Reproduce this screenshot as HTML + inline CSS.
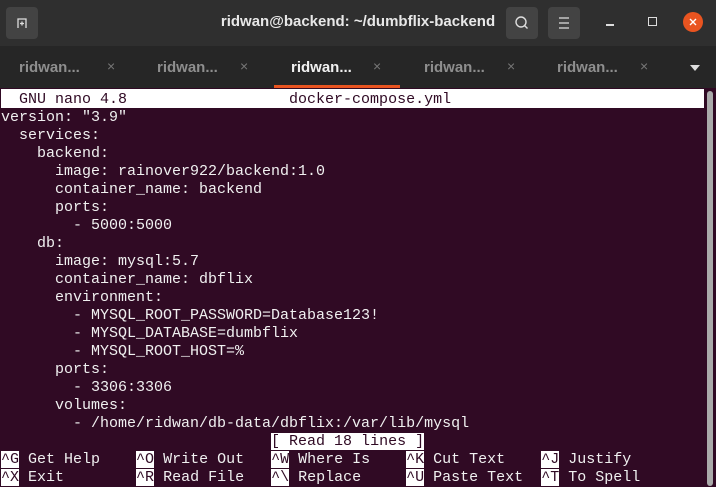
<!DOCTYPE html>
<html><head><style>
*{margin:0;padding:0;box-sizing:border-box}
body{width:716px;height:486px;overflow:hidden;background:#300a24;font-family:"Liberation Sans",sans-serif;position:relative}
.hdr{position:absolute;left:0;top:0;width:716px;height:46px;background:#2f2f2f}
.tabs{position:absolute;left:0;top:46px;width:716px;height:42px;background:#262626}
.btn{position:absolute;top:7px;width:32px;height:32px;background:#434343;border-radius:4px}
.title{position:absolute;top:13px;left:0;width:716px;text-align:center;color:#e8e8e8;font-weight:bold;font-size:15px}
.tab{position:absolute;top:13px;font-size:15px;font-weight:bold;color:#8e8e8e}
.x{position:absolute;top:12px;color:#777;font-size:14px}
.term{position:absolute;left:1px;top:91px;font-family:"Liberation Mono",monospace;font-size:15px;line-height:18px;color:#f0f0f0;white-space:pre}
.inv{background:#fff;color:#300a24}
.sb{position:absolute;left:707px;top:91px;width:6px;height:395px;background:#aaa;border-radius:3px}
</style></head><body>
<div class="hdr">
<div class="btn" style="left:6px"><svg width="32" height="32"><path d="M12 21V12h8v9M14 16.5h4M16 14.5v4" stroke="#ddd" stroke-width="1.3" fill="none"/></svg></div>
<div class="title">ridwan@backend: ~/dumbflix-backend</div>
<div class="btn" style="left:506px"><svg width="32" height="32"><circle cx="15" cy="15" r="5" stroke="#ddd" stroke-width="1.4" fill="none"/><path d="M18.5 18.5l3 3" stroke="#ddd" stroke-width="1.4"/></svg></div>
<div class="btn" style="left:548px"><svg width="32" height="32"><path d="M11 11h10M11 16h10M11 21h10" stroke="#ddd" stroke-width="1.2"/></svg></div>
<div style="position:absolute;left:606px;top:24px;width:8px;height:1.5px;background:#ddd"></div>
<div style="position:absolute;left:648px;top:17px;width:9px;height:9px;border:1.4px solid #ddd"></div>
<div style="position:absolute;left:683px;top:12px;width:20px;height:20px;border-radius:50%;background:#e95420"><svg width="20" height="20"><path d="M7 7l6 6M13 7l-6 6" stroke="#fff" stroke-width="1.4"/></svg></div>
</div>
<div class="tabs">
<div class="tab" style="left:19px">ridwan...</div><div class="x" style="left:107px">×</div>
<div class="tab" style="left:157px">ridwan...</div><div class="x" style="left:240px">×</div>
<div class="tab" style="left:291px;color:#f0f0f0">ridwan...</div><div class="x" style="left:373px">×</div>
<div class="tab" style="left:424px">ridwan...</div><div class="x" style="left:507px">×</div>
<div class="tab" style="left:557px">ridwan...</div><div class="x" style="left:640px">×</div>
<div style="position:absolute;left:690px;top:19px;border-left:5px solid transparent;border-right:5px solid transparent;border-top:6px solid #ddd"></div>
<div style="position:absolute;left:274px;top:39px;width:126px;height:3px;background:#e95420"></div>
</div>
<div style="position:absolute;left:1px;top:89px;width:703px;height:19px;background:#fff"></div>
<div class="sb"></div>
<div class="term"><span style="color:#300a24">  GNU nano 4.8                  docker-compose.yml</span>
version: "3.9"
  services:
    backend:
      image: rainover922/backend:1.0
      container_name: backend
      ports:
        - 5000:5000
    db:
      image: mysql:5.7
      container_name: dbflix
      environment:
        - MYSQL_ROOT_PASSWORD=Database123!
        - MYSQL_DATABASE=dumbflix
        - MYSQL_ROOT_HOST=%
      ports:
        - 3306:3306
      volumes:
        - /home/ridwan/db-data/dbflix:/var/lib/mysql
                              <span class="inv">[ Read 18 lines ]</span>
<span class="inv">^G</span> Get Help    <span class="inv">^O</span> Write Out   <span class="inv">^W</span> Where Is    <span class="inv">^K</span> Cut Text    <span class="inv">^J</span> Justify
<span class="inv">^X</span> Exit        <span class="inv">^R</span> Read File   <span class="inv">^\</span> Replace     <span class="inv">^U</span> Paste Text  <span class="inv">^T</span> To Spell</div>
</body></html>
